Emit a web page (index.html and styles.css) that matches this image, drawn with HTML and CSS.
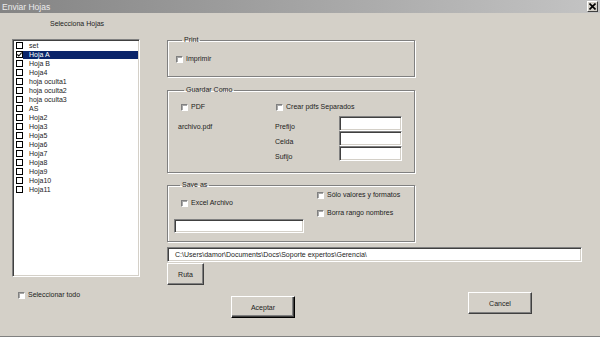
FILE: index.html
```html
<!DOCTYPE html>
<html lang="es">
<head>
    <meta charset="UTF-8">
    <title>Enviar Hojas</title>
    <link rel="stylesheet" href="styles.css">
</head>
<body>

<div class="window">
    <div class="titlebar">
        <span class="title">Enviar Hojas</span>
        <span class="close">
            <svg width="7" height="7" viewBox="0 0 7 7"><path d="M0.5 0.5L6.5 6.5M6.5 0.5L0.5 6.5" stroke="#000" stroke-width="1.6"/></svg>
        </span>
    </div>

    <div class="content">
        <div class="left">
            <div class="caption">Selecciona Hojas</div>
            <ul class="listbox">
                <li><span class="box"></span><span class="name">set</span></li>
                <li class="selected"><span class="box"><svg width="5" height="5" viewBox="0 0 5 5"><path d="M0.3 2.4L1.8 4L4.7 0.6" stroke="#000" stroke-width="1.1" fill="none"/></svg></span><span class="name">Hoja A</span></li>
                <li><span class="box"></span><span class="name">Hoja B</span></li>
                <li><span class="box"></span><span class="name">Hoja4</span></li>
                <li><span class="box"></span><span class="name">hoja oculta1</span></li>
                <li><span class="box"></span><span class="name">hoja oculta2</span></li>
                <li><span class="box"></span><span class="name">hoja oculta3</span></li>
                <li><span class="box"></span><span class="name">AS</span></li>
                <li><span class="box"></span><span class="name">Hoja2</span></li>
                <li><span class="box"></span><span class="name">Hoja3</span></li>
                <li><span class="box"></span><span class="name">Hoja5</span></li>
                <li><span class="box"></span><span class="name">Hoja6</span></li>
                <li><span class="box"></span><span class="name">Hoja7</span></li>
                <li><span class="box"></span><span class="name">Hoja8</span></li>
                <li><span class="box"></span><span class="name">Hoja9</span></li>
                <li><span class="box"></span><span class="name">Hoja10</span></li>
                <li><span class="box"></span><span class="name">Hoja11</span></li>
            </ul>
            <label class="check selall"><span class="cb"></span>Seleccionar todo</label>
        </div>

        <div class="right">
            <fieldset class="frame print">
                <legend>Print</legend>
                <label class="check"><span class="cb"></span>Imprimir</label>
            </fieldset>

            <fieldset class="frame guardar">
                <legend>Guardar Como</legend>
                <div class="pdf-grid">
                    <label class="check pdf"><span class="cb"></span>PDF</label>
                    <label class="check separados"><span class="cb"></span>Crear pdfs Separados</label>
                    <span class="file">archivo.pdf</span>
                    <span class="lbl">Prefijo</span>
                    <span class="field small"></span>
                    <span class="lbl">Celda</span>
                    <span class="field small"></span>
                    <span class="lbl">Sufijo</span>
                    <span class="field small"></span>
                </div>
            </fieldset>

            <fieldset class="frame saveas">
                <legend>Save as</legend>
                <div class="save-cols">
                    <div class="save-left">
                        <label class="check excel"><span class="cb"></span>Excel Archivo</label>
                        <span class="field name-field"></span>
                    </div>
                    <div class="save-right">
                        <label class="check"><span class="cb"></span>Sólo valores y formatos</label>
                        <label class="check"><span class="cb"></span>Borra rango nombres</label>
                    </div>
                </div>
            </fieldset>

            <div class="field path">C:\Users\damor\Documents\Docs\Soporte expertos\Gerencia\</div>
            <button class="btn ruta">Ruta</button>

            <div class="actions">
                <button class="btn default aceptar">Aceptar</button>
                <button class="btn cancel">Cancel</button>
            </div>
        </div>
    </div>
</div>

</body>
</html>
```

FILE: styles.css
```css
html, body {
    margin: 0;
    padding: 0;
}
body {
    background: #d4d0c8;
    font-family: "Liberation Sans", Arial, sans-serif;
    font-size: 7px;
    color: #1c1c1c;
}
.window {
    width: 600px;
    height: 337px;
    box-sizing: border-box;
    border-bottom: 1px solid #808080;
    overflow: hidden;
}
.titlebar {
    height: 13px;
    display: flex;
    align-items: center;
    background: linear-gradient(to right, #848484, #c4c4c4);
}
.title {
    padding-left: 2px;
    font-size: 8.5px;
    color: #ececec;
}
.close {
    margin-left: auto;
    margin-right: 2px;
    width: 11px;
    height: 11px;
    box-sizing: border-box;
    display: flex;
    align-items: center;
    justify-content: center;
    background: #d4d0c8;
    border: 1px solid;
    border-color: #fff #404040 #404040 #fff;
}

.content {
    display: flex;
}
.left {
    padding-left: 12px;
    width: 128px;
}
.caption {
    padding: 7px 0 0 38px;
    height: 19px;
    line-height: 8px;
}
.listbox {
    list-style: none;
    margin: 0;
    width: 128px;
    height: 238px;
    box-sizing: border-box;
    background: #fff;
    border: 1px solid;
    border-color: #808080 #fff #fff #808080;
    box-shadow: inset 1px 1px 0 #404040, inset -1px -1px 0 #d4d0c8;
    padding: 1px;
}
.listbox li {
    display: flex;
    align-items: center;
    height: 9px;
}
.box {
    width: 7px;
    height: 7px;
    box-sizing: border-box;
    margin-left: 2px;
    border: 1px solid #000;
    display: flex;
    align-items: center;
    justify-content: center;
    background: #fff;
}
.name {
    flex: 1;
    height: 8px;
    line-height: 8px;
    padding-left: 6px;
}
.selected .name {
    background: #0a246a;
    color: #fff;
}

.check {
    display: flex;
    align-items: center;
    height: 8px;
    line-height: 8px;
    white-space: nowrap;
}
.cb {
    width: 7px;
    height: 7px;
    box-sizing: border-box;
    margin-right: 3px;
    background: #fff;
    border: 1px solid;
    border-color: #808080 #fff #fff #808080;
    box-shadow: inset 1px 1px 0 #a8a8a8;
}
.selall {
    margin: 14px 0 0 6px;
}

.right {
    margin-left: 27px;
    width: 415px;
}
.frame {
    margin: 0;
    width: 248px;
    box-sizing: border-box;
    min-width: 0;
    border: 1px solid #808080;
    box-shadow: inset 1px 1px 0 #fff, 1px 1px 0 #fff;
}
.frame legend {
    padding: 0 2px;
    margin-left: 6px;
    line-height: 8px;
}
.print {
    margin-top: 23px;
    padding: 11px 0 13px 8px;
}
.guardar {
    margin-top: 9px;
    padding: 9px 0 11px 10px;
}
.saveas {
    margin-top: 8px;
    padding: 0 0 8px 6px;
}

.pdf-grid {
    display: grid;
    grid-template-columns: 97px 64px 63px;
    grid-template-rows: 13px 15px 15px 15px;
}
.pdf {
    margin-left: 3px;
    align-self: start;
}
.separados {
    grid-column: 2 / 4;
    margin-left: 1px;
    align-self: start;
}
.file {
    grid-column: 1;
    grid-row: 2;
    align-self: end;
    line-height: 8px;
}
.lbl {
    grid-column: 2;
    align-self: end;
    line-height: 8px;
}
.pdf-grid .field {
    grid-column: 3;
}

.field {
    display: block;
    box-sizing: border-box;
    background: #fff;
    border: 1px solid;
    border-color: #808080 #fff #fff #808080;
    box-shadow: inset 1px 1px 0 #404040, inset -1px -1px 0 #d4d0c8;
}
.small {
    width: 63px;
    height: 15px;
}

.save-cols {
    display: flex;
}
.save-left {
    width: 143px;
}
.excel {
    margin: 10px 0 0 7px;
}
.name-field {
    margin-top: 12px;
    width: 130px;
    height: 14px;
}
.save-right {
    padding-top: 2px;
    display: flex;
    flex-direction: column;
    gap: 10px;
}

.path {
    margin-top: 5px;
    width: 415px;
    height: 15px;
    line-height: 13px;
    padding-left: 7px;
}

.btn {
    display: block;
    font-family: "Liberation Sans", Arial, sans-serif;
    font-size: 7px;
    background: #d4d0c8;
    color: #1c1c1c;
    padding: 0;
    border: 1px solid;
    border-color: #fff #404040 #404040 #fff;
    box-shadow: inset -1px -1px 0 #808080;
}
.ruta {
    margin-top: 1px;
    width: 37px;
    height: 22px;
}
.actions {
    display: flex;
    align-items: flex-start;
}
.aceptar {
    margin: 11px 0 0 64px;
    width: 64px;
    height: 22px;
}
.default {
    border-color: #fff #000 #000 #fff;
    box-shadow: inset -1px -1px 0 #404040, inset -2px -2px 0 #808080;
}
.cancel {
    margin: 7px 0 0 173px;
    width: 64px;
    height: 22px;
}
```
